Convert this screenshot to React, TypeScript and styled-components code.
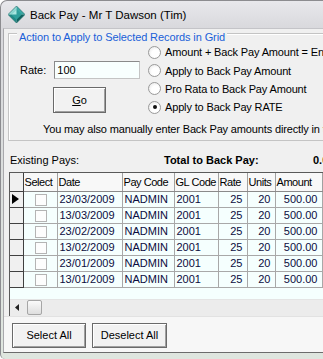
import React from 'react';
import styled, { createGlobalStyle } from 'styled-components';

const GlobalStyle = createGlobalStyle`
  html, body {
    margin: 0;
    padding: 0;
    width: 323px;
    height: 359px;
    overflow: hidden;
    font-family: "Liberation Sans", Arial, sans-serif;
    font-size: 11px;
    color: #000;
  }
`;

interface PayRow {
  date: string;
  payCode: string;
  glCode: string;
  rate: number;
  units: number;
  amount: string;
}

const pays: PayRow[] = [
  { date: '23/03/2009', payCode: 'NADMIN', glCode: '2001', rate: 25, units: 20, amount: '500.00' },
  { date: '13/03/2009', payCode: 'NADMIN', glCode: '2001', rate: 25, units: 20, amount: '500.00' },
  { date: '23/02/2009', payCode: 'NADMIN', glCode: '2001', rate: 25, units: 20, amount: '500.00' },
  { date: '13/02/2009', payCode: 'NADMIN', glCode: '2001', rate: 25, units: 20, amount: '500.00' },
  { date: '23/01/2009', payCode: 'NADMIN', glCode: '2001', rate: 25, units: 20, amount: '500.00' },
  { date: '13/01/2009', payCode: 'NADMIN', glCode: '2001', rate: 25, units: 20, amount: '500.00' },
];

const radioOptions = [
  'Amount + Back Pay Amount = Enter',
  'Apply to Back Pay Amount',
  'Pro Rata to Back Pay Amount',
  'Apply to Back Pay RATE',
];

// widths of the grid columns, right border included
const columns = [
  { title: '', width: 13 },
  { title: 'Select', width: 34 },
  { title: 'Date', width: 65 },
  { title: 'Pay Code', width: 52 },
  { title: 'GL Code', width: 44 },
  { title: 'Rate', width: 29 },
  { title: 'Units', width: 28 },
  { title: 'Amount', width: 47 },
  { title: 'Back Pay', width: 60 },
];

const Frame = styled.div`
  width: 380px;
  height: 359px;
  box-sizing: border-box;
  display: flex;
  flex-direction: column;
  background: linear-gradient(to bottom, #e8e8ec 0px, #d8d8dc 28px, #dfe6df 100%);
  border-left: 1px solid #8c8c90;
  border-top: 1px solid #8c8c90;
  border-top-left-radius: 7px;
  border-bottom-left-radius: 5px;
  padding: 0 0 0 2px;
`;

const TitleBar = styled.div`
  height: 27px;
  flex-shrink: 0;
  display: flex;
  align-items: center;
  gap: 5px;
  padding-left: 5px;
  font-size: 11.5px;
`;

const Client = styled.div`
  height: 325px;
  box-sizing: border-box;
  flex-shrink: 0;
  display: flex;
  flex-direction: column;
  background: #f0f0f0;
  border-left: 1px solid #a8a8ac;
  border-top: 1px solid #c4c4c8;
  border-bottom: 1px solid #6c6c6c;
`;

const GroupBox = styled.div`
  position: relative;
  margin: 4px 0 0 4px;
  border: 1px solid #c4c4c4;
  border-right: none;
  box-shadow: inset 1px 1px 0 #fff;
`;

const Legend = styled.span`
  position: absolute;
  top: -4px;
  left: 8px;
  padding: 0 2px;
  line-height: 14px;
  background: #f0f0f0;
  color: #1a5fd8;
  letter-spacing: -0.1px;
  white-space: nowrap;
`;

const GroupTop = styled.div`
  display: flex;
  padding-top: 9px;
`;

const LeftCol = styled.div`
  width: 139px;
  flex-shrink: 0;
  padding-top: 18px;
  display: flex;
  flex-direction: column;
`;

const RateRow = styled.div`
  height: 18px;
  display: flex;
  align-items: center;
  padding-left: 11px;
  gap: 8px;
`;

const RateInput = styled.div`
  width: 82px;
  height: 16px;
  border: 1px solid #8a8a8a;
  border-right-color: #c4c4c4;
  border-bottom-color: #c4c4c4;
  background: #f8fffe;
  display: flex;
  align-items: center;
  padding-left: 2px;
`;

const WinButton = styled.button<{ $w: number }>`
  width: ${({ $w }) => $w}px;
  height: 25px;
  box-sizing: border-box;
  font-family: inherit;
  font-size: 11px;
  color: #000;
  background: #f2f2f2;
  border: 1px solid #6a6a6a;
  box-shadow: inset 1px 1px 0 #fff, inset -1px -1px 0 #a0a0a0;
  padding: 0;
`;

const GoButton = styled(WinButton)`
  margin: 8px 0 0 44px;
  height: 26px;
`;

const RadioCol = styled.div`
  display: flex;
  flex-direction: column;
`;

const RadioRow = styled.div`
  height: 18.4px;
  display: flex;
  align-items: center;
  gap: 4px;
  white-space: nowrap;
  letter-spacing: -0.15px;
`;

const RadioCircle = styled.span<{ $checked: boolean }>`
  width: 11px;
  height: 11px;
  border-radius: 50%;
  border: 1px solid #9a9a9a;
  background: radial-gradient(circle at 60% 60%, #ffffff 40%, #e2e2e2 100%);
  display: flex;
  align-items: center;
  justify-content: center;
  flex-shrink: 0;

  &::after {
    content: '';
    width: 4px;
    height: 4px;
    border-radius: 50%;
    background: #111;
    display: ${({ $checked }) => ($checked ? 'block' : 'none')};
  }
`;

const ManualNote = styled.div`
  height: 18px;
  margin: 3px 0 2px;
  padding-left: 34px;
  display: flex;
  align-items: center;
  white-space: nowrap;
  letter-spacing: -0.15px;
`;

const TotalsRow = styled.div`
  height: 18px;
  margin-top: 10px;
  display: flex;
  align-items: center;
  padding-left: 6px;
  white-space: nowrap;
`;

const ExistingLabel = styled.span`
  width: 154px;
  flex-shrink: 0;
`;

const TotalLabel = styled.span`
  width: 149px;
  flex-shrink: 0;
  font-weight: bold;
`;

const TotalValue = styled.span`
  font-weight: bold;
`;

const GridArea = styled.div`
  margin: 3px 0 0 5px;
  height: 144px;
  box-sizing: border-box;
  flex-shrink: 0;
  display: flex;
  flex-direction: column;
  background: #f5fffe;
  border-left: 1px solid #5a5a5a;
  border-top: 1px solid #5a5a5a;
  overflow: hidden;
`;

const GridBody = styled.div`
  flex: 1;
`;

const Table = styled.table`
  width: 372px;
  border-collapse: collapse;
  table-layout: fixed;
  font-size: 11px;
`;

const Col = styled.col<{ $w: number }>`
  width: ${({ $w }) => $w}px;
`;

const HeadCell = styled.th`
  height: 18px;
  padding: 0 0 0 1px;
  text-align: left;
  font-weight: normal;
  letter-spacing: -0.45px;
  background: #f8f8f8;
  border-right: 1px solid #a0a0a0;
  border-bottom: 1px solid #8a8a8a;
  white-space: nowrap;
  overflow: hidden;
`;

const CornerCell = styled.th`
  padding: 0;
  background: #f0f0f0;
  border-right: 1px solid #404040;
  border-bottom: 1px solid #404040;
`;

const RowHead = styled.td`
  padding: 0;
  height: 15px;
  background: #f0f0f0;
  border-right: 1px solid #404040;
  border-bottom: 1px solid #404040;
`;

const Cell = styled.td<{ $align?: 'left' | 'right' | 'center' }>`
  padding: ${({ $align }) => ($align === 'right' ? '0 4px 0 0' : '0 0 0 2px')};
  height: 15px;
  text-align: ${({ $align }) => $align || 'left'};
  color: #0c0c40;
  border-right: 1px solid #a8a8a8;
  border-bottom: 1px solid #a8a8a8;
  white-space: nowrap;
  overflow: hidden;
`;

const CheckBox = styled.span`
  display: inline-block;
  vertical-align: middle;
  width: 10px;
  height: 10px;
  border: 1px solid #b4b4b4;
  background: #fdfdfd;
`;

const HScroll = styled.div`
  height: 16px;
  flex-shrink: 0;
  background: #ececec;
  border-top: 1px solid #e4e4e4;
  display: flex;
  align-items: center;
  padding-left: 5px;
  gap: 8px;
`;

const ScrollThumb = styled.div`
  width: 13px;
  height: 13px;
  border: 1px solid #a6a6a6;
  border-radius: 2px;
  background: linear-gradient(to bottom, #fbfbfb, #dedede);
`;

const BottomBar = styled.div`
  flex: 1;
  background: #f7f7f7;
  border-top: 1px solid #e2e2e2;
  display: flex;
  align-items: flex-start;
  gap: 6px;
  padding: 6px 0 0 8px;
`;

const AppIcon = () => (
  <svg width="17" height="17" viewBox="0 0 16 16">
    <polygon points="8,0 0,8 8,8" fill="#8ed8d2" />
    <polygon points="8,0 16,8 8,8" fill="#3aa9a6" />
    <polygon points="0,8 8,16 8,8" fill="#1f8a86" />
    <polygon points="16,8 8,16 8,8" fill="#0f625f" />
    <polygon points="8,3 13,8 8,13 3,8" fill="#2f9f9b" />
    <polygon points="8,3 3,8 8,8" fill="#a9e6e0" />
    <polygon points="8,0 16,8 8,16 0,8" fill="none" stroke="#166a67" strokeWidth="0.6" />
  </svg>
);

const ScrollArrow = () => (
  <svg width="4" height="7" viewBox="0 0 4 7">
    <polygon points="4,0 0,3.5 4,7" fill="#222" />
  </svg>
);

const CurrentMarker = () => (
  <svg width="8" height="10" viewBox="0 0 8 10" style={{ display: 'block', marginLeft: 2 }}>
    <polygon points="0,0 7,5 0,10" fill="#000" />
  </svg>
);

export default function App() {
  return (
    <>
      <GlobalStyle />
      <Frame>
        <TitleBar>
          <AppIcon />
          <span>Back Pay - Mr T Dawson (Tim)</span>
        </TitleBar>
        <Client>
          <GroupBox>
            <Legend>Action to Apply to Selected Records in Grid</Legend>
            <GroupTop>
              <LeftCol>
                <RateRow>
                  <span>Rate:</span>
                  <RateInput>100</RateInput>
                </RateRow>
                <GoButton $w={53}>
                  <u>G</u>o
                </GoButton>
              </LeftCol>
              <RadioCol>
                {radioOptions.map((label, i) => (
                  <RadioRow key={label}>
                    <RadioCircle $checked={i === 3} />
                    {label}
                  </RadioRow>
                ))}
              </RadioCol>
            </GroupTop>
            <ManualNote>
              You may also manually enter Back Pay amounts directly in the grid
            </ManualNote>
          </GroupBox>

          <TotalsRow>
            <ExistingLabel>Existing Pays:</ExistingLabel>
            <TotalLabel>Total to Back Pay:</TotalLabel>
            <TotalValue>0.00</TotalValue>
          </TotalsRow>

          <GridArea>
            <GridBody>
              <Table>
                <colgroup>
                  {columns.map((c, i) => (
                    <Col key={i} $w={c.width} />
                  ))}
                </colgroup>
                <thead>
                  <tr>
                    <CornerCell />
                    {columns.slice(1).map((c) => (
                      <HeadCell key={c.title}>{c.title}</HeadCell>
                    ))}
                  </tr>
                </thead>
                <tbody>
                  {pays.map((p, i) => (
                    <tr key={p.date}>
                      <RowHead>{i === 0 && <CurrentMarker />}</RowHead>
                      <Cell $align="center">
                        <CheckBox />
                      </Cell>
                      <Cell>{p.date}</Cell>
                      <Cell>{p.payCode}</Cell>
                      <Cell>{p.glCode}</Cell>
                      <Cell $align="right">{p.rate}</Cell>
                      <Cell $align="right">{p.units}</Cell>
                      <Cell $align="right">{p.amount}</Cell>
                      <Cell $align="right">0.00</Cell>
                    </tr>
                  ))}
                </tbody>
              </Table>
            </GridBody>
            <HScroll>
              <ScrollArrow />
              <ScrollThumb />
            </HScroll>
          </GridArea>

          <BottomBar>
            <WinButton $w={74}>Select All</WinButton>
            <WinButton $w={75}>Deselect All</WinButton>
          </BottomBar>
        </Client>
      </Frame>
    </>
  );
}
